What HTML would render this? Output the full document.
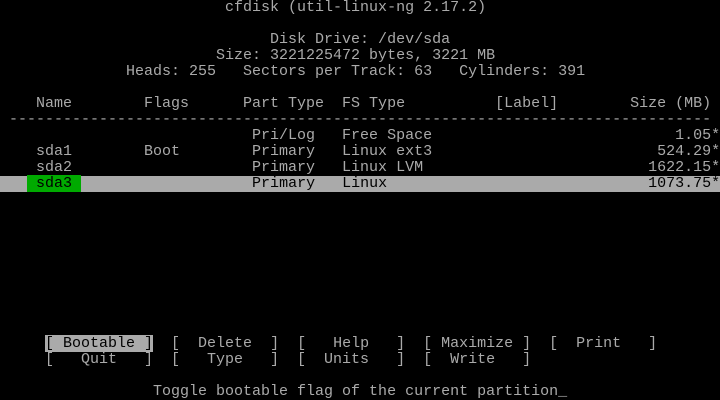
<!DOCTYPE html>
<html><head><meta charset="utf-8"><style>
html,body{margin:0;padding:0;background:#000;}
body{width:720px;height:400px;position:relative;overflow:hidden;}
pre{position:absolute;left:0;margin:0;font-family:"Liberation Mono",monospace;font-size:15px;line-height:16px;height:16px;color:#aaa;white-space:pre;}
.bar{background:#aaa;color:#000;width:720px;}
.g{background:#0a0;color:#000;}
.k{color:#000;background:#aaa;}
</style></head><body>
<pre style="top:0">                         cfdisk (util-linux-ng 2.17.2)</pre>
<pre style="top:32px">                              Disk Drive: /dev/sda</pre>
<pre style="top:48px">                        Size: 3221225472 bytes, 3221 MB</pre>
<pre style="top:64px">              Heads: 255   Sectors per Track: 63   Cylinders: 391</pre>
<pre style="top:96px">    Name        Flags      Part Type  FS Type          [Label]        Size (MB)</pre>
<pre style="top:112px"> ------------------------------------------------------------------------------</pre>
<pre style="top:128px">                            Pri/Log   Free Space                           1.05*</pre>
<pre style="top:144px">    sda1        Boot        Primary   Linux ext3                         524.29*</pre>
<pre style="top:160px">    sda2                    Primary   Linux LVM                         1622.15*</pre>
<pre style="top:176px" class="bar">   <span class="g"> sda3 </span>                   Primary   Linux                             1073.75*</pre>
<pre style="top:336px">     <span class="k">[ Bootable ]</span>  [  Delete  ]  [   Help   ]  [ Maximize ]  [  Print   ]</pre>
<pre style="top:352px">     [   Quit   ]  [   Type   ]  [  Units   ]  [  Write   ]</pre>
<pre style="top:384px">                 Toggle bootable flag of the current partition_</pre>
</body></html>
